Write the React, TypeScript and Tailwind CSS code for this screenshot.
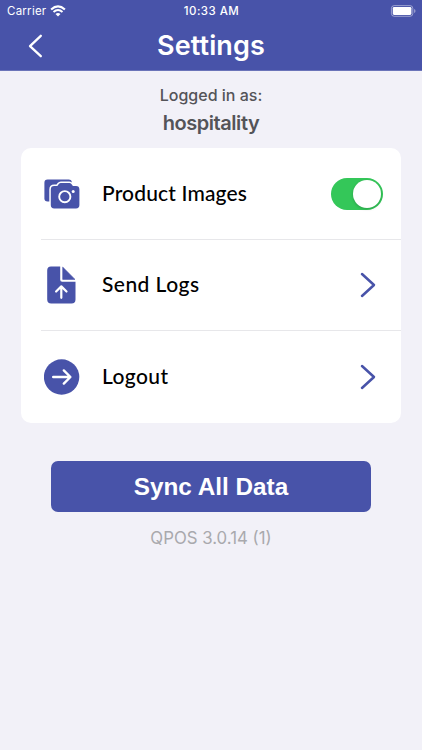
import React from 'react';

const CameraIcon = () => (
  <svg width="36" height="30" viewBox="0 0 36 30" fill="none">
    <rect x="0.4" y="0.5" width="27.4" height="22" rx="3.2" fill="#4853a9" />
    <path
      d="M9.6 6.6h3.1l1.5-2.1q.8-1 2-1h8.6q1.2 0 2 1l1.5 2.1h3.1q3.4 0 3.4 3.4v15.6q0 3.4-3.4 3.4H9.6q-3.4 0-3.4-3.4V10q0-3.4 3.4-3.4z"
      fill="#4853a9"
      stroke="#fff"
      strokeWidth="3"
      transform="translate(.6 .4)"
      style={{ paintOrder: 'stroke' }}
    />
    <circle cx="20.8" cy="17.7" r="5.6" stroke="#fff" strokeWidth="1.9" />
    <circle cx="29.2" cy="12.6" r="1.5" fill="#fff" />
  </svg>
);

const FileUploadIcon = () => (
  <svg width="29" height="38" viewBox="0 0 29 38" fill="none">
    <path d="M4 .5h9.2v13.2q0 2 2 2h13.3v17.8q0 4-4 4H4.2q-4 0-4-4V4.5q0-4 3.8-4z" fill="#4853a9" />
    <path d="M15.7 1.1L28 13.4H15.7z" fill="#4853a9" stroke="#4853a9" strokeWidth="0.6" strokeLinejoin="round" />
    <path d="M14.3 31.8V20.6M9.1 25.5l5.2-5.1 5.2 5.1" stroke="#fff" strokeWidth="2.2" strokeLinecap="round" strokeLinejoin="round" />
  </svg>
);

const LogoutIcon = () => (
  <svg width="36" height="36" viewBox="0 0 36 36" fill="none">
    <circle cx="17.6" cy="18" r="17.7" fill="#4853a9" />
    <path d="M9.2 18h16.6M19.8 11.4l6.6 6.6-6.6 6.6" stroke="#fff" strokeWidth="2.4" strokeLinecap="round" strokeLinejoin="round" />
  </svg>
);

const Chevron = () => (
  <svg width="16" height="26" viewBox="0 0 16 26" fill="none">
    <path d="M2 2l12 11L2 24" stroke="#4853a9" strokeWidth="2.5" strokeLinecap="round" strokeLinejoin="round" />
  </svg>
);

const WifiIcon = () => (
  <svg width="16" height="12" viewBox="0 0 16 12" fill="none">
    <path d="M1.1 4.5q6.9-6.2 13.8 0" stroke="#fff" strokeWidth="2.2" />
    <path d="M3.5 7q4.5-4 9 0" stroke="#fff" strokeWidth="2" />
    <path d="M5.5 9.1q2.5-2.1 5 0L8 11.6z" fill="#fff" />
  </svg>
);

const BatteryIcon = () => (
  <svg width="26" height="12" viewBox="0 0 26 12" fill="none">
    <rect x="1.4" y="0.6" width="21.4" height="10.7" rx="2.8" stroke="#fff" strokeOpacity="0.45" />
    <rect x="2.8" y="2" width="18.6" height="7.9" rx="1.3" fill="#fff" />
    <path d="M24.3 4v4q1.1-.6 1.1-2t-1.1-2z" fill="#fff" fillOpacity="0.6" />
  </svg>
);

const Toggle = () => (
  <div className="flex h-8 w-[52px] justify-end rounded-full bg-[#34c759] p-0.5">
    <div className="size-7 rounded-full bg-white shadow-[0_1px_3px_rgba(0,0,0,0.2)]" />
  </div>
);

const ROWS = [
  { id: 'images', label: 'Product Images', icon: CameraIcon, toggle: true, spacing: 'tracking-[0.15px]' },
  { id: 'logs', label: 'Send Logs', icon: FileUploadIcon, toggle: false, spacing: 'tracking-[0.45px]' },
  { id: 'logout', label: 'Logout', icon: LogoutIcon, toggle: false, spacing: 'tracking-[0.4px]' },
];

const App = () => {
  return (
    <div className="flex h-[750px] w-[422px] flex-col bg-[#f2f1f8] font-['Inter',sans-serif]">
      <header className="h-[71px] border-b border-[#6b74b9] bg-[#4853a9] text-white">
        <div className="grid h-[22px] grid-cols-3 items-center pl-[7px] pr-[6px] text-[11.5px] leading-none">
          <div className="flex items-center gap-1">
            <span className="pt-0.5 tracking-[0.25px]">Carrier</span>
            <WifiIcon />
          </div>
          <span className="pt-0.5 text-center font-medium tracking-[0.45px]">10:33 AM</span>
          <div className="flex justify-end">
            <BatteryIcon />
          </div>
        </div>
        <div className="grid h-[46px] grid-cols-[60px_1fr_60px] items-center">
          <svg className="ml-7 mt-0.5" width="15" height="24" viewBox="0 0 15 24" fill="none">
            <path d="M12.8 1.8L2 12.2l10.8 10" stroke="#fff" strokeWidth="2.3" strokeLinecap="round" strokeLinejoin="round" />
          </svg>
          <h1 className="text-center text-[27px] font-semibold leading-none tracking-[0.1px]">Settings</h1>
        </div>
      </header>

      <div className="flex h-[77px] flex-col items-center pt-[14px] text-[#545458]">
        <p className="text-base font-medium leading-5">Logged in as:</p>
        <p className="mt-1 text-[20px] font-semibold leading-7 tracking-[-0.45px]">hospitality</p>
      </div>

      <section className="mx-[21px] h-[275px] rounded-[10px] bg-white pl-5">
        {ROWS.map((row) => {
          const Icon = row.icon;
          return (
            <div key={row.id} className="flex h-[91.5px] items-center border-b border-[#e7e7ea] pt-px last:border-b-0 last:pt-0">
              <div className="flex w-[41px] justify-center">
                <Icon />
              </div>
              <span className={`ml-5 flex-1 pb-[3px] font-['Lato',sans-serif] text-[21px] font-medium leading-none text-black ${row.spacing}`}>
                {row.label}
              </span>
              <div className={row.toggle ? 'mr-[18px]' : 'mr-[25px]'}>
                {row.toggle ? <Toggle /> : <Chevron />}
              </div>
            </div>
          );
        })}
      </section>

      <button className="mx-[51px] mt-[38px] h-[51px] rounded-[7px] bg-[#4853a9] pt-0.5 font-['Liberation_Sans',sans-serif] text-[24.3px] font-bold leading-none text-white">
        Sync All Data
      </button>
      <p className="mt-4 text-center text-[16.8px] leading-5 text-[#a9a9ad]">QPOS 3.0.14 (1)</p>
    </div>
  );
};

export default App;
